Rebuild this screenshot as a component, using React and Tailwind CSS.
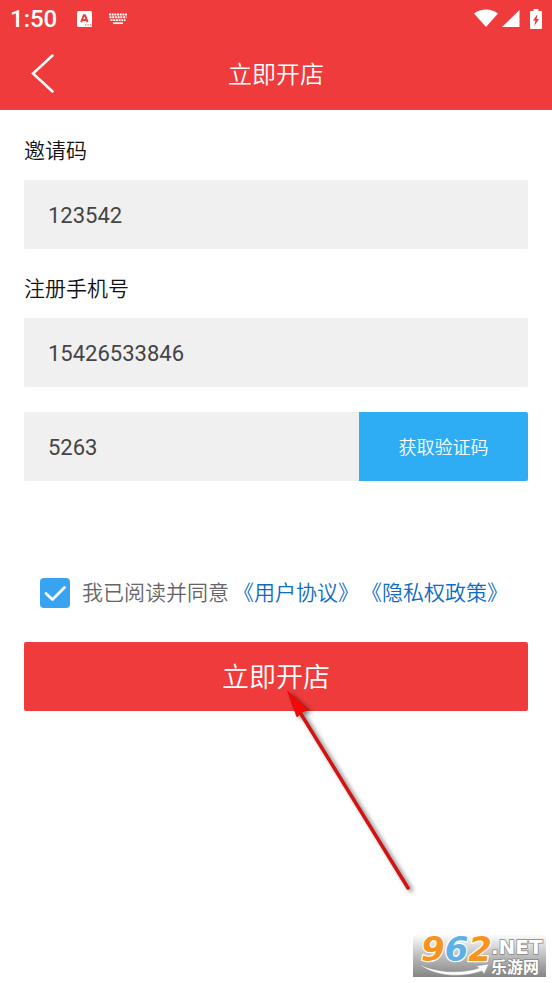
import React, { useState } from 'react';

function StatusBar() {
  return (
    <div className="h-[38px] px-2.5 flex items-center justify-between">
      <div className="flex items-center">
        <span className="text-2xl font-medium">1:50</span>
        <svg className="ml-5 w-4 h-4" viewBox="0 0 16 16" fill="none">
          <rect x="0" y="0" width="15" height="16" rx="1.5" fill="#fff" />
          <path d="M4.2 11.2 6.800 4.200h1.200l2.600 7.000M5.400 9h4" stroke="#ef3b3b" strokeWidth="2" />
          <path d="M8 14h1.200M10.500 14h1.200M12.900 14h1.200" stroke="#ef3b3b" strokeWidth="1.2" />
        </svg>
        <svg className="ml-[15px] w-5 h-3" viewBox="0 0 20 12" stroke="#fff" fill="none">
          <path d="M1 1.500h18M1.500 4.300h17M2.500 7.100h15" strokeWidth="1.900" strokeDasharray="2 0.700" />
          <path d="M5 10.200h10" strokeWidth="1.700" />
        </svg>
      </div>
      <div className="flex items-center">
        <svg className="w-6 h-5" viewBox="0 0 24 20" fill="#fff">
          <path d="M0 4.500C7-1 17-1 24 4.500L12 18Z" />
        </svg>
        <svg className="ml-1 w-[18px] h-[18px]" viewBox="0 0 18 18" fill="#fff">
          <path d="M17.500 0v17H0Z" />
        </svg>
        <svg className="ml-2.5 w-3 h-5" viewBox="0 0 12 20">
          <path d="M3.500 0h5v2H11q1 0 1 1v16q0 1-1 1H1q-1 0-1-1V3q0-1 1-1h2.500Z" fill="#fff" />
          <path d="M7.500 5 3 11.500h2.400L4.300 17 9 10H6.600Z" fill="#ef3b3b" />
        </svg>
      </div>
    </div>
  );
}

function Watermark() {
  return (
    <svg className="w-[133px] h-[42px] overflow-visible" viewBox="0 0 133 42">
      <defs>
        <linearGradient id="plate" x1="0" y1="0" x2="0" y2="1">
          <stop offset="0" stopColor="#fcfcfc" />
          <stop offset="0.5" stopColor="#bdbdbd" />
          <stop offset="1" stopColor="#858585" />
        </linearGradient>
      </defs>
      <rect width="133" height="42" fill="url(#plate)" />
      <path
        d="M6 29c17 9 42 10 60 4l-3-2 13-2-5 10-2-3C50 43 21 42 6 29Z"
        fill="#fff"
        stroke="#999"
        strokeWidth="0.6"
      />
      <text
        x="8"
        y="26"
        fontFamily="'DejaVu Sans', sans-serif"
        fontWeight="700"
        fontStyle="italic"
        fontSize="34"
        stroke="#fff"
        strokeWidth="2.500"
        paintOrder="stroke"
        strokeLinejoin="round"
      >
        <tspan fill="#f79420">9</tspan>
        <tspan fill="#5eb1e4">6</tspan>
        <tspan fill="#f79420">2</tspan>
      </text>
      <g fill="#fff" stroke="#858585" strokeWidth="1.5" paintOrder="stroke" fontWeight="700">
        <text x="78" y="19" fontSize="20" fontFamily="'DejaVu Sans', sans-serif">.NET</text>
        <text x="78" y="38" fontSize="16" fontFamily="'Noto Sans CJK SC', sans-serif">乐游网</text>
      </g>
    </svg>
  );
}

export default function App() {
  const [form, setForm] = useState({ invite: '123542', phone: '15426533846', code: '5263' });
  const [agreed, setAgreed] = useState(true);

  const update = (e) => setForm({ ...form, [e.target.name]: e.target.value });

  return (
    <div lang="zh-CN" className="min-h-screen flex flex-col bg-white font-['Roboto','Noto_Sans_CJK_SC',sans-serif]">
      <header className="bg-[#ef3b3b] text-white">
        <StatusBar />
        <div className="h-[72px] px-6 grid grid-cols-[40px_1fr_40px] items-center">
          <button type="button" aria-label="返回" className="w-10 h-10">
            <svg className="w-10 h-10" viewBox="0 0 40 40" fill="none" stroke="#fff" strokeWidth="2.500" strokeLinecap="round">
              <path d="M28.500 1.500 9 19.500 28.500 37.500" />
            </svg>
          </button>
          <h1 className="pt-0.5 text-center text-2xl font-[350]">立即开店</h1>
        </div>
      </header>

      <form className="px-6 pt-[25px]" onSubmit={(e) => e.preventDefault()}>
        {/* Invite code */}
        <label htmlFor="invite" className="block text-[21px] leading-8 font-[350] text-[#111]">邀请码</label>
        <input
          id="invite"
          name="invite"
          value={form.invite}
          onChange={update}
          className="block mt-[13px] w-full h-[69px] px-6 pt-0.5 rounded-xs bg-[#f0f0f0] text-[22px] text-[#444] outline-none"
        />

        {/* Phone + verification code */}
        <label htmlFor="phone" className="block mt-6 text-[21px] leading-8 font-[350] text-[#111]">注册手机号</label>
        <input
          id="phone"
          name="phone"
          value={form.phone}
          onChange={update}
          className="block mt-[13px] w-full h-[69px] px-6 pt-0.5 rounded-xs bg-[#f0f0f0] text-[22px] text-[#444] outline-none"
        />
        <div className="mt-[25px] flex h-[69px] rounded-xs overflow-hidden">
          <input
            name="code"
            aria-label="验证码"
            value={form.code}
            onChange={update}
            className="flex-1 min-w-0 px-6 pt-0.5 bg-[#f0f0f0] text-[22px] text-[#444] outline-none"
          />
          <button type="button" className="w-[169px] pt-0.5 bg-[#2eadf5] text-white text-lg font-[350]">获取验证码</button>
        </div>

        {/* Agreement */}
        <div className="mt-24 px-4 flex items-center text-[21px] leading-8 font-[350] whitespace-nowrap">
          <span className="relative w-[30px] h-[30px] shrink-0">
            <input
              id="agree"
              type="checkbox"
              checked={agreed}
              onChange={(e) => setAgreed(e.target.checked)}
              className="peer block w-full h-full appearance-none rounded bg-[#d4d4d4] checked:bg-[#38a3f1]"
            />
            <svg
              className="absolute inset-0 pointer-events-none hidden peer-checked:block"
              viewBox="0 0 30 30"
              fill="none"
              stroke="#fff"
              strokeWidth="2.800"
              strokeLinecap="round"
              strokeLinejoin="round"
            >
              <path d="M6 15.500 12.500 21.500 24.500 9.500" />
            </svg>
          </span>
          <label htmlFor="agree" className="ml-3 text-[#666]">我已阅读并同意</label>
          <a href="#terms" className="ml-1 text-[#0c6bc4]">《用户协议》</a>
          <a href="#privacy" className="ml-0.5 text-[#0c6bc4]">《隐私权政策》</a>
        </div>

        <div className="relative mt-[33px]">
          <button type="submit" className="block w-full h-[69px] pt-1 rounded-xs bg-[#ef3b3b] text-white text-[27px] font-[350]">
            立即开店
          </button>
          <svg className="absolute left-1/2 top-12 w-36 h-[210px] pointer-events-none overflow-visible" viewBox="0 0 144 210">
            <g style={{ filter: 'drop-shadow(3px 2px 2px rgba(0,0,0,0.5))' }}>
              <path d="M25 24 132 198" stroke="#d31212" strokeWidth="3.500" strokeLinecap="round" />
              <path d="M11.500 1 32 20 26 22 21 27Z" fill="#f90606" stroke="#d01010" strokeWidth="0.8" />
            </g>
          </svg>
        </div>
      </form>

      <footer className="mt-auto pr-1.5 pb-1.5 flex justify-end">
        <Watermark />
      </footer>
    </div>
  );
}
